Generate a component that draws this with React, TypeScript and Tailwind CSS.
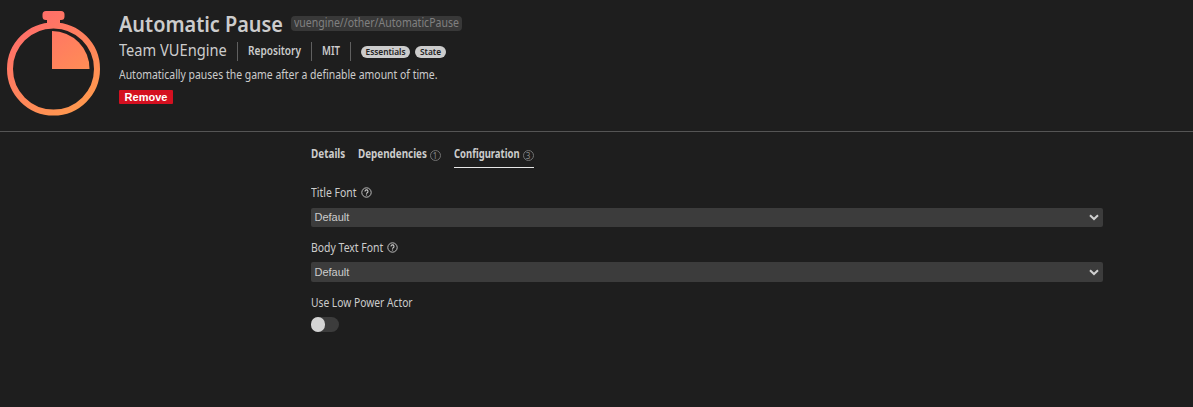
import type { ReactNode } from "react";

function StopwatchLogo() {
  return (
    <svg className="block h-[120px] w-[108px]" viewBox="0 0 108 120" fill="none">
      <defs>
        <linearGradient id="warm" gradientUnits="userSpaceOnUse" x1="22" y1="18" x2="90" y2="108">
          <stop stopColor="#ff6b6b" />
          <stop offset="1" stopColor="#ff9a4d" />
        </linearGradient>
      </defs>
      <circle cx="53.5" cy="69" r="43.5" stroke="url(#warm)" strokeWidth="6" />
      <path d="M46 11h15a3.5 3.5 0 0 1 3.5 3.5v2A3.5 3.5 0 0 1 61 20h-1v5H47v-5h-1a3.5 3.5 0 0 1-3.5-3.5v-2A3.5 3.5 0 0 1 46 11Z" fill="url(#warm)" />
      <path d="M52 31a37.5 37.5 0 0 1 37.5 38H52Z" fill="url(#warm)" />
    </svg>
  );
}

function Narrow({ children, scale = "scale-x-[0.87]" }: { children: ReactNode; scale?: string }) {
  return <span className={`block w-max origin-left whitespace-nowrap ${scale}`}>{children}</span>;
}

function HelpIcon() {
  return (
    <svg className="mb-px size-[11px] shrink-0" viewBox="0 0 11 11" fill="none" stroke="#cccccc">
      <circle cx="5.5" cy="5.5" r="4.7" strokeWidth="0.9" />
      <path d="M4 4.4a1.5 1.5 0 1 1 2.2 1.3c-.5.3-.7.5-.7 1M5.5 7.5v1" strokeWidth="1.1" />
    </svg>
  );
}

function CountBadge({ count }: { count: number }) {
  return (
    <span className="mt-[4px] flex size-[11px] shrink-0 items-center justify-center rounded-full border border-[#727272] text-[8px] leading-none font-normal text-[#8a8a8a]">
      {count}
    </span>
  );
}

function Tag({ children, width }: { children: ReactNode; width: string }) {
  return (
    <span className={`flex h-3 items-center justify-center rounded-full bg-[#cccccc] text-[8.3px] leading-none font-semibold whitespace-nowrap text-[#222222] ${width}`}>
      {children}
    </span>
  );
}

function SelectField({ label, labelWidth, box }: { label: string; labelWidth: string; box: string }) {
  return (
    <div>
      <div className="flex h-4 items-center">
        <div className={labelWidth}>
          <Narrow>{label}</Narrow>
        </div>
        <HelpIcon />
      </div>
      <div className={`flex items-center justify-between rounded-[2px] bg-[#3c3c3c] pr-1 pl-1 font-['Liberation_Sans',sans-serif] text-[11px] leading-none ${box}`}>
        <span>Default</span>
        <svg className="h-[7px] w-[10px]" viewBox="0 0 10 7" fill="none" stroke="#d0d0d0" strokeWidth="2">
          <path d="m1 1.2 4 3.8 4-3.8" />
        </svg>
      </div>
    </div>
  );
}

export default function App() {
  return (
    <div className="h-[407px] w-[1193px] overflow-hidden bg-[#1e1e1e] font-['Noto_Sans',sans-serif] text-[12px] leading-4 text-[#cccccc]">
      <header className="flex h-[132px] border-b border-[#555555]">
        <StopwatchLogo />
        <div className="ml-[11px] pt-[11px]">
          <div className="flex h-6 items-center">
            <h1 className="w-[172px] text-[22px] leading-6 font-semibold">
              <Narrow scale="scale-x-[0.904]">Automatic Pause</Narrow>
            </h1>
            <span className="flex h-[15px] w-[171px] items-center rounded-[4px] bg-[#383838] pl-[3px] leading-none text-[#808080]">
              <Narrow scale="scale-x-[0.876]">vuengine//other/AutomaticPause</Narrow>
            </span>
          </div>
          <div className="mt-[7px] flex h-[19px] items-center">
            <div className="w-[118px] pb-[3px] text-[16px] leading-none">
              <Narrow scale="scale-x-[0.915]">Team VUEngine</Narrow>
            </div>
            <div className="flex h-full w-[74px] items-center border-l border-[#606060] pb-[2px] pl-[10px] font-semibold">
              <Narrow scale="scale-x-[0.84]">Repository</Narrow>
            </div>
            <div className="flex h-full w-[40px] items-center border-x border-[#606060] pb-[2px] pl-[10px] font-semibold">
              <Narrow scale="scale-x-[0.8]">MIT</Narrow>
            </div>
            <div className="mt-[1px] ml-[10px] flex gap-[5px]">
              <Tag width="w-[49px]">Essentials</Tag>
              <Tag width="w-[31px]">State</Tag>
            </div>
          </div>
          <div className="mt-[6px] w-80">
            <Narrow>Automatically pauses the game after a definable amount of time.</Narrow>
          </div>
          <button className="mt-[7px] flex h-[14px] w-[54px] items-center justify-center rounded-[1px] bg-[#d41020] font-['Liberation_Sans',sans-serif] text-[11px] leading-none font-bold text-white">
            Remove
          </button>
        </div>
      </header>
      <main className="ml-[310.5px] w-[792.5px]">
        <nav className="flex h-9 pt-[14px] font-bold">
          <div className="w-[47px]">
            <Narrow scale="scale-x-[0.825]">Details</Narrow>
          </div>
          <div className="flex w-[96px]">
            <div className="w-[72px]">
              <Narrow scale="scale-x-[0.82]">Dependencies</Narrow>
            </div>
            <CountBadge count={1} />
          </div>
          <div className="flex w-[80.5px] border-b border-[#e7e7e7]">
            <div className="w-[69px]">
              <Narrow scale="scale-x-[0.79]">Configuration</Narrow>
            </div>
            <CountBadge count={3} />
          </div>
        </nav>
        <section className="mt-[17px] flex flex-col">
          <SelectField label="Title Font" labelWidth="w-[50.5px]" box="mt-[7px] h-[19px]" />
          <div className="mt-[13px]">
            <SelectField label="Body Text Font" labelWidth="w-[76.5px]" box="mt-[6px] h-5" />
          </div>
          <div className="mt-[13px]">
            <Narrow scale="scale-x-[0.855]">Use Low Power Actor</Narrow>
            <div className="mt-[6px] h-[15px] w-7 rounded-full bg-[#3c3c3c]">
              <div className="h-[15px] w-[14px] rounded-full bg-[#d4d4d4]" />
            </div>
          </div>
        </section>
      </main>
    </div>
  );
}
